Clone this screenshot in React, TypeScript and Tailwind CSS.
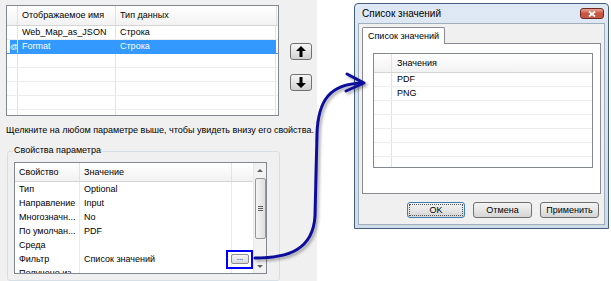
import React from 'react';

function ArrowBtn({ dir }: { dir: 'up' | 'down' }) {
  return (
    <button className="w-[22px] h-[17px] flex items-center justify-center rounded-[3px] border border-[#707070] bg-gradient-to-b from-[#f6f6f6] via-[#e6e6e6] to-[#d2d2d2]">
      <svg width="10" height="11" viewBox="0 0 10 11" className={dir === 'down' ? 'rotate-180' : ''}>
        <polygon points="5,0 10,5 6.5,5 6.5,11 3.5,11 3.5,5 0,5" fill="#000" />
      </svg>
    </button>
  );
}

function WinButton({ label, focused }: { label: string; focused?: boolean }) {
  return (
    <button
      className={`h-[16px] rounded-[3px] border bg-gradient-to-b from-[#f3f3f3] via-[#e6e6e6] to-[#d4d4d4] text-[9px] leading-none text-black flex items-center justify-center ${
        focused ? 'w-[58px] border-[#3c7fb1]' : 'w-[59px] border-[#707070]'
      }`}
    >
      <span className={focused ? 'w-[54px] h-[12px] border border-dotted border-[#555] flex items-center justify-center' : ''}>
        {label}
      </span>
    </button>
  );
}

const topRows = [
  { name: 'Web_Map_as_JSON', type: 'Строка', sel: false },
  { name: 'Format', type: 'Строка', sel: true },
  { name: '', type: '', sel: false },
  { name: '', type: '', sel: false },
  { name: '', type: '', sel: false },
  { name: '', type: '', sel: false },
  { name: '', type: '', sel: false },
];

const props = [
  ['Тип', 'Optional'],
  ['Направление', 'Input'],
  ['Многозначн...', 'No'],
  ['По умолчан...', 'PDF'],
  ['Среда', ''],
  ['Фильтр', 'Список значений'],
  ['Получено из', ''],
];

export default function App() {
  return (
    <div className="relative w-[611px] h-[281px] overflow-hidden flex bg-white text-black font-['Liberation_Sans',Arial,sans-serif] text-[9px] leading-none">
      {/* Left panel */}
      <div className="w-[317px] h-full bg-[#f0f0f0] pl-[6px] pt-[5px] flex flex-col">
        <div className="flex">
          <div className="w-[273px] h-[111px] border border-[#828790] bg-white overflow-hidden">
            <div className="flex h-[20px] border-b border-[#d5d5d5] bg-gradient-to-b from-white to-[#f2f2f2]">
              <div className="w-[11px] border-r border-[#e2e2e2]" />
              <div className="w-[98px] border-r border-[#e2e2e2] pl-[4px] flex items-center">Отображаемое имя</div>
              <div className="w-[161px] border-r border-[#e2e2e2] pl-[4px] flex items-center">Тип данных</div>
            </div>
            {topRows.map((r, i) => (
              <div key={i} className={`flex h-[14px] border-b ${r.sel ? 'border-[#3399ff]' : 'border-[#ececec]'}`}>
                <div className="w-[11px] border-r border-[#e2e2e2] flex items-center">
                  {r.sel && (
                    <div className="ml-[3px] w-[7px] h-[13px] bg-[#3399ff] text-white overflow-hidden flex items-center text-[8px]">@</div>
                  )}
                </div>
                <div className={`w-[98px] border-r pl-[4px] flex items-center ${r.sel ? 'bg-[#3399ff] text-white border-[#3399ff]' : 'border-[#e2e2e2]'}`}>
                  {r.name}
                </div>
                <div className={`w-[160px] pl-[4px] flex items-center ${r.sel ? 'bg-[#3399ff] text-white' : 'border-r border-[#e2e2e2]'}`}>
                  {r.type}
                </div>
              </div>
            ))}
          </div>
          <div className="ml-[11px] pt-[38px] flex flex-col gap-[14px]">
            <ArrowBtn dir="up" />
            <ArrowBtn dir="down" />
          </div>
        </div>

        <div className="mt-[8px] h-[12px] flex items-center whitespace-nowrap">
          Щелкните на любом параметре выше, чтобы увидеть внизу его свойства.
        </div>

        {/* Group box */}
        <div className="relative mt-[15px] ml-[1px] w-[273px] flex-1 border border-[#d5dfe5] rounded-[3px] px-[6px] pt-[10px]">
          <div className="absolute -top-[6px] left-[5px] px-[1px] bg-[#f0f0f0] leading-none">Свойства параметра</div>
          <div className="w-[253px] h-[112px] border border-[#828790] bg-white flex overflow-hidden">
            <div className="w-[238px] flex flex-col">
              <div className="flex h-[19px] shrink-0 border-b border-[#d5d5d5] bg-gradient-to-b from-white to-[#f2f2f2]">
                <div className="w-[65px] border-r border-[#e2e2e2] pl-[4px] flex items-center">Свойство</div>
                <div className="w-[152px] border-r border-[#e2e2e2] pl-[4px] flex items-center">Значение</div>
                <div className="flex-1" />
              </div>
              {props.map(([k, v], i) => (
                <div key={i} className="flex h-[14px] shrink-0">
                  <div className="w-[65px] border-r border-[#ececec] pl-[4px] flex items-center whitespace-nowrap overflow-hidden">{k}</div>
                  <div className="w-[152px] border-r border-[#ececec] pl-[4px] flex items-center whitespace-nowrap">{v}</div>
                  <div className="flex-1 flex items-center">
                    {k === 'Фильтр' && (
                      <div className="relative -ml-[1px]">
                        <div className="w-[18px] h-[10px] rounded-[2px] border border-[#8e8f8f] bg-gradient-to-b from-[#f6f6f6] to-[#d9d9d9] flex items-end justify-center text-[8px] leading-[8px] pb-[1px]">...</div>
                        <div className="absolute -left-[5px] -top-[4px] w-[27px] h-[19px] border-2 border-[#0000ff]" />
                      </div>
                    )}
                  </div>
                </div>
              ))}
            </div>
            {/* scrollbar */}
            <div className="w-[13px] bg-[#f2f2f2] border-l border-[#e8e8e8] flex flex-col items-center">
              <div className="h-[15px] flex items-center justify-center">
                <div className="w-0 h-0 border-l-[3px] border-r-[3px] border-b-[3px] border-l-transparent border-r-transparent border-b-[#606060]" />
              </div>
              <div className="w-[11px] h-[61px] rounded-[2px] border border-[#979797] bg-gradient-to-r from-[#f4f4f4] to-[#dedede] flex flex-col items-center justify-center gap-[1px]">
                <div className="w-[5px] h-px bg-[#606060]" />
                <div className="w-[5px] h-px bg-[#606060]" />
                <div className="w-[5px] h-px bg-[#606060]" />
              </div>
              <div className="flex-1" />
              <div className="h-[14px] flex items-center justify-center">
                <div className="w-0 h-0 border-l-[3px] border-r-[3px] border-t-[3px] border-l-transparent border-r-transparent border-t-[#606060]" />
              </div>
            </div>
          </div>
        </div>
      </div>

      {/* Right area with dialog */}
      <div className="flex-1 pl-[37px] pt-[3px]">
        <div className="w-[255px] h-[226px] border border-[#44607c] rounded-t-[4px] bg-gradient-to-b from-[#dfe9f5] to-[#cfdbe9] flex flex-col px-[3px] pb-[3px]">
          <div className="h-[19px] shrink-0 flex items-center pl-[4px] pr-[1px] justify-between">
            <span className="text-[10px]">Список значений</span>
            <div className="w-[24px] h-[11px] rounded-[3px] border border-[#6d2a22] bg-gradient-to-b from-[#e8a493] via-[#c9543f] to-[#c45a45] flex items-center justify-center">
              <svg width="8" height="6" viewBox="0 0 8 6">
                <path d="M1 0.5 L7 5.5 M7 0.5 L1 5.5" stroke="#fff" strokeWidth="1.8" />
              </svg>
            </div>
          </div>
          <div className="flex-1 bg-[#f0f0f0] border border-[#a0adbb] px-[3px] pt-[3px] flex flex-col">
            <div className="flex">
              <div className="w-[83px] h-[17px] bg-white border border-b-0 border-[#898c95] rounded-t-[2px] pl-[5px] flex items-center relative z-10 -mb-px">
                Список значений
              </div>
            </div>
            <div className="h-[151px] bg-white border border-[#898c95] pl-[10px] pt-[9px]">
              <div className="w-[220px] h-[115px] border border-[#828790] overflow-hidden">
                <div className="flex h-[19px] border-b border-[#d5d5d5] bg-gradient-to-b from-white to-[#f2f2f2]">
                  <div className="w-[18px] border-r border-[#e2e2e2]" />
                  <div className="flex-1 pl-[5px] flex items-center">Значения</div>
                </div>
                {['PDF', 'PNG', '', '', '', '', ''].map((v, i) => (
                  <div key={i} className="flex h-[14px] border-b border-[#ececec]">
                    <div className="w-[18px] border-r border-[#e2e2e2]" />
                    <div className="flex-1 pl-[5px] flex items-center">{v}</div>
                  </div>
                ))}
              </div>
            </div>
            <div className="mt-[8px] flex justify-end gap-[8px] pr-[2px]">
              <WinButton label="OK" focused />
              <WinButton label="Отмена" />
              <WinButton label="Применить" />
            </div>
          </div>
        </div>
      </div>

      {/* Connector arrow */}
      <svg className="absolute left-0 top-0 pointer-events-none" width="611" height="281" viewBox="0 0 611 281">
        <defs>
          <filter id="sh" x="-20%" y="-20%" width="140%" height="140%">
            <feDropShadow dx="2" dy="2" stdDeviation="1.5" floodColor="#000" floodOpacity="0.35" />
          </filter>
        </defs>
        <g filter="url(#sh)" fill="none" stroke="#0a0a9c" strokeWidth="3" strokeLinecap="round" strokeLinejoin="round">
          <path d="M255 258 C288 258 313 250 315 216 L317 134 C318 100 330 84 362 83" />
          <polyline points="347,74 364,83 346,91" />
        </g>
      </svg>
    </div>
  );
}
